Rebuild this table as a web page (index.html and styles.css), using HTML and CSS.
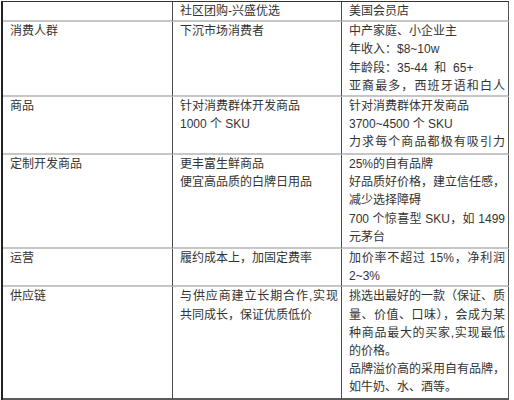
FILE: index.html
```html
<!DOCTYPE html>
<html lang="zh">
<head>
<meta charset="utf-8">
<link rel="stylesheet" href="styles.css">
</head>
<body>
<table class="cmp">
  <colgroup>
    <col class="c1"><col class="c2"><col class="c3">
  </colgroup>
  <tr class="r0">
    <td></td>
    <td><span class="ln">社区团购-兴盛优选</span></td>
    <td><span class="ln">美国会员店</span></td>
  </tr>
  <tr class="r1">
    <td><span class="ln">消费人群</span></td>
    <td><span class="ln">下沉市场消费者</span></td>
    <td>
      <span class="ln">中产家庭、小企业主</span>
      <span class="ln">年收入：$8~10w</span>
      <span class="ln">年龄段：35-44 &nbsp;和 &nbsp;65+</span>
      <span class="ln j">亚裔最多，西班牙语和白人</span>
    </td>
  </tr>
  <tr class="r2">
    <td><span class="ln">商品</span></td>
    <td>
      <span class="ln">针对消费群体开发商品</span>
      <span class="ln">1000 个 SKU</span>
    </td>
    <td>
      <span class="ln">针对消费群体开发商品</span>
      <span class="ln">3700~4500 个 SKU</span>
      <span class="ln j">力求每个商品都极有吸引力</span>
    </td>
  </tr>
  <tr class="r3">
    <td><span class="ln">定制开发商品</span></td>
    <td>
      <span class="ln">更丰富生鲜商品</span>
      <span class="ln">便宜高品质的白牌日用品</span>
    </td>
    <td>
      <span class="ln">25%的自有品牌</span>
      <span class="ln j">好品质好价格，建立信任感，</span>
      <span class="ln">减少选择障碍</span>
      <span class="ln j">700 个惊喜型 SKU，如 1499</span>
      <span class="ln">元茅台</span>
    </td>
  </tr>
  <tr class="r4">
    <td><span class="ln">运营</span></td>
    <td><span class="ln">履约成本上，加固定费率</span></td>
    <td>
      <span class="ln j">加价率不超过 15%，净利润</span>
      <span class="ln">2~3%</span>
    </td>
  </tr>
  <tr class="r5">
    <td><span class="ln">供应链</span></td>
    <td>
      <span class="ln j">与供应商建立长期合作,实现</span>
      <span class="ln">共同成长，保证优质低价</span>
    </td>
    <td>
      <span class="ln j">挑选出最好的一款（保证、质</span>
      <span class="ln j">量、价值、口味），会成为某</span>
      <span class="ln j">种商品最大的买家,实现最低</span>
      <span class="ln">的价格。</span>
      <span class="ln j">品牌溢价高的采用自有品牌，</span>
      <span class="ln">如牛奶、水、酒等。</span>
    </td>
  </tr>
</table>
</body>
</html>
```

FILE: styles.css
```css
html, body {
  margin: 0;
  padding: 0;
  background: #ffffff;
}

body {
  font-family: "Liberation Sans", "Noto Sans CJK SC", sans-serif;
  font-size: 12px;
  color: #333333;
}

.cmp {
  margin: 1px 0 0 1px;
  border-collapse: separate;
  border-spacing: 0;
  table-layout: fixed;
  width: 508px;
  border-top: 1px solid #333333;
  border-left: 2px solid #222222;
}

.c1 { width: 170px; }
.c2 { width: 169px; }
.c3 { width: 167px; }

.cmp td {
  padding: 0 3px 0 7px;
  vertical-align: top;
  line-height: 18.2px;
  border-right: 1px solid #4a4a4a;
  border-bottom: 2px solid #c6c6c6;
  white-space: nowrap;
}

.cmp td:last-child {
  border-right-color: #555555;
}

.cmp tr:last-child td {
  border-bottom: 2px solid #5a5a5a;
}

.ln {
  display: block;
}

.j {
  text-align: justify;
  text-align-last: justify;
}

.r0 { height: 19px; }
.r1 { height: 74px; }
.r2 { height: 58px; }
.r3 { height: 94px; }
.r4 { height: 37px; }
.r5 { height: 113px; }
```
